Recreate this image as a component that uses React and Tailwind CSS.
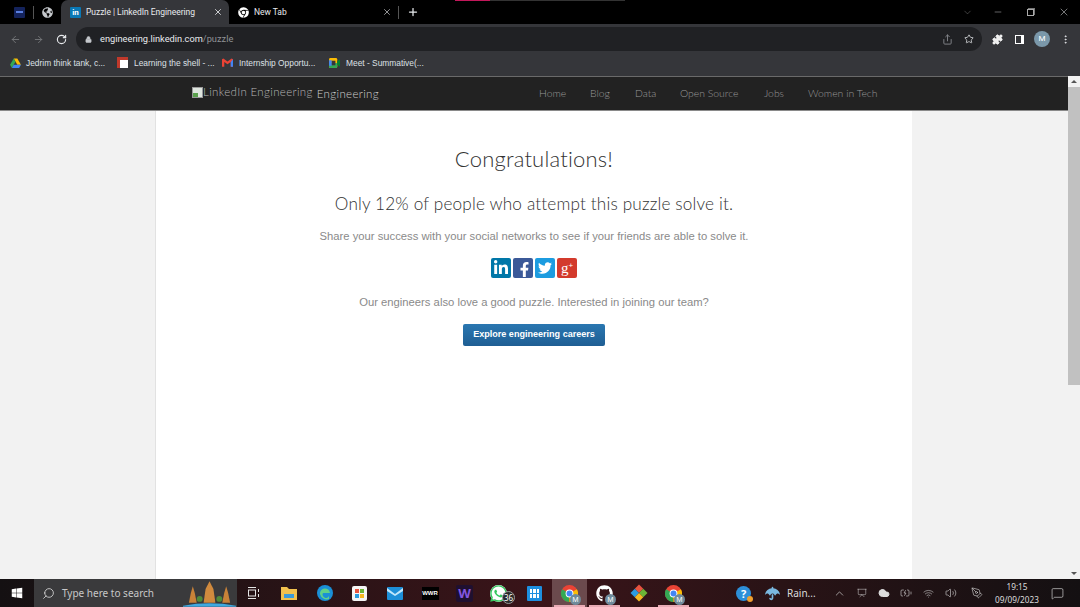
import { useState } from "react";
import {
  ArrowLeft,
  ArrowRight,
  RotateCw,
  Lock,
  Share,
  Star,
  Puzzle,
  MoreVertical,
  X,
  Plus,
  ChevronDown,
  Minus,
  Search,
  ChevronUp,
  Wifi,
  Volume2,
  Cloud,
  BatteryCharging,
  Presentation,
  PenTool,
  MessageSquare,
} from "lucide-react";
import {
  FaLinkedinIn,
  FaFacebookF,
  FaTwitter,
  FaWhatsapp,
  FaGithub,
  FaWindows,
  FaUmbrella,
  FaChrome,
  FaGlobeAmericas,
} from "react-icons/fa";

const navLinks = [
  { label: "Home", w: "w-[51px]" },
  { label: "Blog", w: "w-[45px]" },
  { label: "Data", w: "w-[45px]" },
  { label: "Open Source", w: "w-[84px]" },
  { label: "Jobs", w: "w-[44px]" },
  { label: "Women in Tech", w: "w-[72px]" },
];

function ChromeLogo({ size = 14 }) {
  return (
    <svg width={size} height={size} viewBox="0 0 24 24">
      <circle cx="12" cy="12" r="12" fill="#ea4335" />
      <path d="M12 12 L1.6 6 A12 12 0 0 0 12 24 Z" fill="#34a853" />
      <path d="M12 12 L12 24 A12 12 0 0 0 22.4 6 Z" fill="#fbbc05" />
      <circle cx="12" cy="12" r="5.5" fill="#fff" />
      <circle cx="12" cy="12" r="4.2" fill="#4285f4" />
    </svg>
  );
}

function Avatar() {
  return (
    <span className="absolute right-[-3px] bottom-[-3px] w-[11px] h-[11px] rounded-full bg-[#6f8a9a] text-white text-[7px] leading-[11px] text-center">
      M
    </span>
  );
}

function TopTabs() {
  return (
    <div className="relative h-6 bg-black flex items-end text-[#e8eaed] shrink-0 font-['Roboto',sans-serif]">
      <div className="absolute left-[455px] top-0 w-[35px] h-px bg-[#c2185b]" />
      <div className="absolute left-[490px] top-0 w-[135px] h-px bg-[#333]" />
      <div className="w-[33px] h-6 flex items-center pl-[14px]">
        <div className="w-[11px] h-[11px] bg-[#14235c] rounded-[1px] flex items-center justify-center">
          <div className="w-[7px] h-[2px] bg-[#5a7fe0]" />
        </div>
      </div>
      <div className="w-px h-[13px] bg-[#555] mb-[5px]" />
      <div className="w-[27px] h-6 flex items-center pl-[8px]">
        <FaGlobeAmericas size={11} className="text-[#c5c8cc]" />
      </div>
      <div className="w-[168px] h-6 bg-[#35363a] rounded-t-[7px] flex items-center pl-[9px] pr-[6px]">
        <div className="w-[11px] h-[11px] bg-[#0a78b5] rounded-[1px] text-white text-[8px] font-bold leading-[11px] text-center shrink-0">
          in
        </div>
        <span className="ml-[5px] text-[8.5px] tracking-[-0.03px] whitespace-nowrap grow">Puzzle | LinkedIn Engineering</span>
        <X size={10} strokeWidth={2} />
      </div>
      <div className="w-[169px] h-6 flex items-center pl-[9px] pr-[6px]">
        <FaChrome size={11} className="text-white" />
        <span className="ml-[5px] text-[8.5px] tracking-[-0.03px] grow">New Tab</span>
        <X size={10} strokeWidth={1.5} />
      </div>
      <div className="w-px h-[13px] bg-[#555] mb-[5px]" />
      <div className="w-[52px] h-6 flex items-center pl-[8px]">
        <Plus size={12} strokeWidth={2.5} />
      </div>
      <div className="grow" />
      <div className="flex h-6 items-center">
        <div className="w-[33px] flex justify-center pl-[6px]"><ChevronDown size={11} className="text-[#888]" strokeWidth={1} /></div>
        <div className="w-[33px] flex justify-center"><Minus size={10} strokeWidth={1} /></div>
        <div className="w-[33px] flex justify-center">
          <div className="w-[7px] h-[7px] border border-[#aaa] shadow-[1px_-1px_0_#777]" />
        </div>
        <div className="w-[33px] flex justify-center"><X size={12} strokeWidth={1} /></div>
      </div>
    </div>
  );
}

function Toolbar() {
  return (
    <div className="h-[30px] bg-[#35363a] flex items-center shrink-0 text-[#e8eaed] font-['Roboto',sans-serif]">
      <div className="w-[27px] flex justify-center pl-[4px]"><ArrowLeft size={11} className="text-[#75777a]" /></div>
      <div className="w-[22px] flex justify-center"><ArrowRight size={11} className="text-[#75777a]" /></div>
      <div className="w-[25px] flex justify-center"><RotateCw size={11} strokeWidth={2.5} /></div>
      <div className="ml-[2px] w-[906px] h-6 bg-[#202124] rounded-full flex items-center pl-[9px] pr-[8px]">
        <Lock size={7} fill="#c5c8cc" className="text-[#c5c8cc]" />
        <span className="ml-[8px] text-[9.25px] text-[#e8eaed]">engineering.linkedin.com</span>
        <span className="text-[9.25px] text-[#8f9296]">/puzzle</span>
        <div className="grow" />
        <Share size={11} className="text-[#85888c] mr-[11px]" />
        <Star size={10} className="text-[#d5d7da]" />
      </div>
      <div className="w-[30px] flex justify-center"><Puzzle size={11} fill="#eee" className="text-white" /></div>
      <div className="w-[14px] flex justify-center">
        <div className="w-[9px] h-[9px] border border-white border-r-[3px] bg-[#35363a]" />
      </div>
      <div className="w-[32px] flex justify-center">
        <div className="w-[16px] h-[16px] rounded-full bg-[#7b98aa] text-white text-[8px] leading-[16px] text-center">M</div>
      </div>
      <div className="w-[14px] flex justify-center"><MoreVertical size={11} /></div>
    </div>
  );
}

function Bookmarks() {
  return (
    <div className="h-[22px] pb-[4px] bg-[#35363a] flex items-center shrink-0 text-[#dee1e6] text-[8.4px] font-['Liberation_Sans',sans-serif]">
      <div className="w-[123px] flex items-center pl-[10px]">
        <svg width="11" height="10" viewBox="0 0 24 22">
          <path d="M8 1h8l8 14H16z" fill="#fbbc05" />
          <path d="M8 1L0 15l4 7 8-14z" fill="#34a853" />
          <path d="M4 22h16l4-7H8z" fill="#4285f4" />
        </svg>
        <span className="ml-[5px] whitespace-nowrap">Jedrim think tank, c...</span>
      </div>
      <div className="w-[105px] flex items-center -ml-[6px]">
        <div className="w-[11px] h-[11px] bg-white border-t-[3px] border-l-[3px] border-[#c0392b]" />
        <span className="ml-[6px] whitespace-nowrap">Learning the shell - ...</span>
      </div>
      <div className="w-[107px] flex items-center">
        <svg width="11" height="9" viewBox="0 0 24 18">
          <path d="M0 2v16h5V8l7 5 7-5v10h5V2l-3-2-9 7-9-7z" fill="#ea4335" />
          <path d="M19 8v10h5V2z" fill="#4285f4" />
        </svg>
        <span className="ml-[6px] whitespace-nowrap">Internship Opportu...</span>
      </div>
      <div className="flex items-center">
        <svg width="11" height="10" viewBox="0 0 24 22">
          <rect x="0" y="0" width="18" height="22" rx="3" fill="#fbbc05" />
          <rect x="0" y="11" width="18" height="11" rx="2" fill="#34a853" />
          <rect x="0" y="5" width="6" height="12" fill="#4285f4" />
          <rect x="6" y="6" width="8" height="10" fill="#35363a" />
          <path d="M18 7l6-4v16l-6-4z" fill="#00832d" />
        </svg>
        <span className="ml-[6px] whitespace-nowrap">Meet - Summative(...</span>
      </div>
    </div>
  );
}

function SiteNav() {
  return (
    <div className="h-[35px] bg-[#222222] border-t border-b border-t-[#6a6a6a] border-b-[#8a8a8a] flex items-center shrink-0 font-['Lato',sans-serif] font-light text-[#999999]">
      <div className="ml-[192px] w-[347px] flex items-center">
        <div className="w-[11px] h-[11px] -mt-[3px] bg-[#dfe6df] border border-[#9a9a9a] shrink-0">
          <div className="w-[5px] h-[4px] mt-[5px] bg-[#5aa14d]" />
        </div>
        <span className="-mt-[3px] text-[11.5px] tracking-[0.35px] whitespace-nowrap text-[#b5b5b5]">LinkedIn Engineering</span>
        <span className="ml-[4px] text-[11.5px] tracking-[0.35px] whitespace-nowrap text-[#cfcfcf]">Engineering</span>
      </div>
      {navLinks.map((link) => (
        <a key={link.label} className={`${link.w} text-[10.4px] whitespace-nowrap`}>
          {link.label}
        </a>
      ))}
    </div>
  );
}

function SocialButton({ bg, children }) {
  return (
    <div className={`w-5 h-5 rounded-[2px] flex items-center justify-center text-white ${bg}`}>
      {children}
    </div>
  );
}

function PuzzleResult() {
  const [careers] = useState("Explore engineering careers");
  return (
    <div className="w-[756px] bg-white flex flex-col items-center overflow-hidden shrink-0">
      <h1 className="mt-[34px] text-[22px] leading-[28px] font-light font-['Lato',sans-serif] text-[#333] tracking-[0.2px]">
        Congratulations!
      </h1>
      <h2 className="mt-[19px] text-[17.2px] leading-[24px] font-light font-['Lato',sans-serif] text-[#333] tracking-[0.15px]">
        Only 12% of people who attempt this puzzle solve it.
      </h2>
      <p className="mt-[12px] text-[11.25px] leading-[16px] font-['Liberation_Sans',sans-serif] text-[#8a8a8a]">
        Share your success with your social networks to see if your friends are able to solve it.
      </p>
      <div className="mt-[14px] flex gap-[2px]">
        <SocialButton bg="bg-[#0077a8]"><FaLinkedinIn size={16} /></SocialButton>
        <SocialButton bg="bg-[#3b5998]"><FaFacebookF size={15} className="mt-[3px] ml-[3px]" /></SocialButton>
        <SocialButton bg="bg-[#1c9ce0]"><FaTwitter size={14} /></SocialButton>
        <SocialButton bg="bg-[#d33a2c]">
          <span className="font-['Liberation_Serif',serif] text-[15px] leading-[18px]">g</span>
          <span className="font-['Liberation_Sans',sans-serif] text-[8px] leading-[10px] -mt-[5px]">+</span>
        </SocialButton>
      </div>
      <p className="mt-[16px] text-[11.25px] leading-[16px] font-['Liberation_Sans',sans-serif] text-[#8a8a8a]">
        Our engineers also love a good puzzle. Interested in joining our team?
      </p>
      <button className="mt-[14px] w-[142px] h-[22px] rounded-[2px] bg-gradient-to-b from-[#2a77b1] to-[#1f5e93] text-white text-[9.05px] font-bold font-['Liberation_Sans',sans-serif]">
        {careers}
      </button>
    </div>
  );
}

function Scrollbar() {
  return (
    <div className="w-3 bg-[#f2f2f2] flex flex-col items-center shrink-0">
      <div className="h-[11px] flex items-center">
        <div className="w-0 h-0 border-x-[3px] border-x-transparent border-b-[3px] border-b-[#555]" />
      </div>
      <div className="w-full h-[298px] bg-[#c1c1c1]" />
      <div className="grow" />
      <div className="h-[11px] flex items-center">
        <div className="w-0 h-0 border-x-[3px] border-x-transparent border-t-[3px] border-t-[#555]" />
      </div>
    </div>
  );
}

function Slot({ w, children, active, underline }) {
  return (
    <div className={`${w} h-7 relative flex items-center justify-center shrink-0 ${active ? "bg-[#6b4a4d]" : ""}`}>
      {children}
      {underline && <div className="absolute bottom-0 left-[2px] right-[2px] h-[2px] bg-[#e8aab4]" />}
    </div>
  );
}

function Taskbar() {
  return (
    <div className="h-7 shrink-0 flex items-center bg-gradient-to-r from-[#141012] via-[#3a1419] to-[#141012] text-white">
      <div className="w-[34px] flex justify-center"><FaWindows size={12} /></div>
      <div className="w-[203px] h-7 bg-[#3a3a3c] flex items-center pl-[8px] overflow-hidden">
        <Search size={13} strokeWidth={1.5} className="text-[#dddddd] -scale-x-100" />
        <span className="ml-[7px] text-[10px] text-[#c8c8c8] font-['Noto_Sans',sans-serif] whitespace-nowrap">Type here to search</span>
        <svg width="53" height="28" viewBox="0 0 54 28" className="ml-[29px] shrink-0">
          <path d="M0 27 Q27 22 54 27 L54 28 L0 28Z" fill="#3fa9e0" />
          <path d="M21 24 L23 10 L27 2 L31 10 L33 24Z" fill="#d08a3e" />
          <path d="M6 24 L8 14 L10 7 L12 14 L14 24Z" fill="#c98238" />
          <path d="M40 24 L42 14 L44 7 L46 14 L48 24Z" fill="#c98238" />
          <circle cx="17" cy="20" r="3" fill="#4f8a3a" />
          <circle cx="37" cy="20" r="3" fill="#4f8a3a" />
        </svg>
      </div>
      <Slot w="w-[33px]">
        <svg width="13" height="12" viewBox="0 0 13 12" fill="none" stroke="#e5e5e5">
          <rect x="1.5" y="3" width="7" height="6" />
          <path d="M1 0.5h8M1 11.5h8M11.5 2v3M11.5 7v3" />
        </svg>
      </Slot>
      <Slot w="w-[37px]">
        <svg width="16" height="14" viewBox="0 0 16 14">
          <path d="M0 1h6l2 2h8v11H0z" fill="#f2c14e" />
          <rect x="3" y="8" width="10" height="4" fill="#3b9ad9" />
        </svg>
      </Slot>
      <Slot w="w-[35px]">
        <svg width="16" height="16" viewBox="0 0 16 16">
          <circle cx="8" cy="8" r="8" fill="#1a8fd6" />
          <path d="M3 9a5 5 0 0 1 10-1H6a3 3 0 0 0 6 3v3A7 7 0 0 1 3 9z" fill="#5fd08a" />
        </svg>
      </Slot>
      <Slot w="w-[34px]">
        <div className="w-[15px] h-[15px] bg-[#f5f5f5] rounded-[2px] grid grid-cols-2 gap-px p-[3px]">
          <div className="bg-[#e8533f]" />
          <div className="bg-[#6bb536]" />
          <div className="bg-[#2b9be0]" />
          <div className="bg-[#f5b822]" />
        </div>
      </Slot>
      <Slot w="w-[37px]">
        <svg width="16" height="13" viewBox="0 0 16 13">
          <rect width="16" height="13" rx="1" fill="#1d8fd8" />
          <path d="M0 1l8 6 8-6v3l-8 5-8-5z" fill="#bfe6fb" />
        </svg>
      </Slot>
      <Slot w="w-[34px]">
        <div className="w-[17px] h-[13px] bg-black text-white text-[6px] font-bold leading-[13px] text-center font-['Liberation_Sans',sans-serif]">WWR</div>
      </Slot>
      <Slot w="w-[35px]">
        <div className="w-[17px] h-[17px] bg-[#1f1030] rounded-[2px] text-[#8457e0] text-[13px] font-bold leading-[17px] text-center">W</div>
      </Slot>
      <Slot w="w-[35px]">
        <div className="w-[17px] h-[17px] rounded-full bg-white -ml-[3px] flex items-center justify-center">
          <FaWhatsapp size={19} className="text-[#35c85f] shrink-0" />
        </div>
        <span className="absolute left-[20px] top-[12px] w-[13px] h-[13px] rounded-full bg-[#2a2a2a] border border-[#999] text-[8px] leading-[11px] text-center">36</span>
      </Slot>
      <Slot w="w-[35px]">
        <div className="w-[15px] h-[15px] bg-[#1d8fe0] rounded-[1px] grid grid-cols-3 gap-px p-[3px]">
          {[0, 1, 2, 3, 4, 5].map((i) => (
            <div key={i} className="bg-white" />
          ))}
        </div>
      </Slot>
      <Slot w="w-[35px]" active underline>
        <div className="relative flex"><ChromeLogo size={17} /><Avatar /></div>
      </Slot>
      <Slot w="w-[35px]" underline>
        <div className="relative flex"><FaGithub size={17} /><Avatar /></div>
      </Slot>
      <Slot w="w-[34px]">
        <div className="w-[12px] h-[12px] rotate-45 grid grid-cols-2">
          <div className="bg-[#e8533f]" />
          <div className="bg-[#6bb536]" />
          <div className="bg-[#2b9be0]" />
          <div className="bg-[#f5b822]" />
        </div>
      </Slot>
      <Slot w="w-[35px]" underline>
        <div className="relative flex"><ChromeLogo size={17} /><Avatar /></div>
      </Slot>
      <div className="grow" />
      <div className="flex items-center text-[#dcdcdc]">
        <div className="relative w-[15px] h-[15px] rounded-full bg-[#2d8fd8] text-white text-[11px] font-bold leading-[15px] text-center">
          ?
          <span className="absolute right-[-2px] bottom-[-1px] w-[6px] h-[6px] rounded-full bg-[#f0a030]" />
        </div>
        <FaUmbrella size={15} className="ml-[14px] text-[#7ab8e0]" />
        <span className="ml-[7px] w-[46px] text-[10px] font-['Noto_Sans',sans-serif]">Rain...</span>
        <ChevronUp size={13} strokeWidth={1.2} className="mr-[11px]" />
        <Presentation size={10} strokeWidth={1.2} className="mr-[11px]" />
        <Cloud size={12} fill="#dcdcdc" className="mr-[10px]" />
        <BatteryCharging size={12} strokeWidth={1.2} className="mr-[11px]" />
        <Wifi size={11} strokeWidth={1.2} className="mr-[11px]" />
        <Volume2 size={12} strokeWidth={1.2} className="mr-[14px]" />
        <PenTool size={12} strokeWidth={1.2} className="mr-[6px]" />
        <div className="w-[56px] text-center text-[8.25px] leading-[13px] font-['Noto_Sans',sans-serif]">
          <div>19:15</div>
          <div>09/09/2023</div>
        </div>
        <div className="w-[24px] flex justify-center"><MessageSquare size={13} strokeWidth={1.2} /></div>
        <div className="w-[11px]" />
      </div>
    </div>
  );
}

export default function App() {
  return (
    <div className="h-[607px] w-[1080px] flex flex-col overflow-hidden bg-[#f2f2f2]">
      <TopTabs />
      <Toolbar />
      <Bookmarks />
      <div className="flex grow min-h-0">
        <div className="flex flex-col grow min-w-0">
          <SiteNav />
          <div className="flex grow min-h-0 justify-center bg-[#f2f2f2]">
            <div className="w-[156px] border-r border-[#e2e2e2]" />
            <PuzzleResult />
            <div className="w-[156px]" />
          </div>
        </div>
        <Scrollbar />
      </div>
      <Taskbar />
    </div>
  );
}
